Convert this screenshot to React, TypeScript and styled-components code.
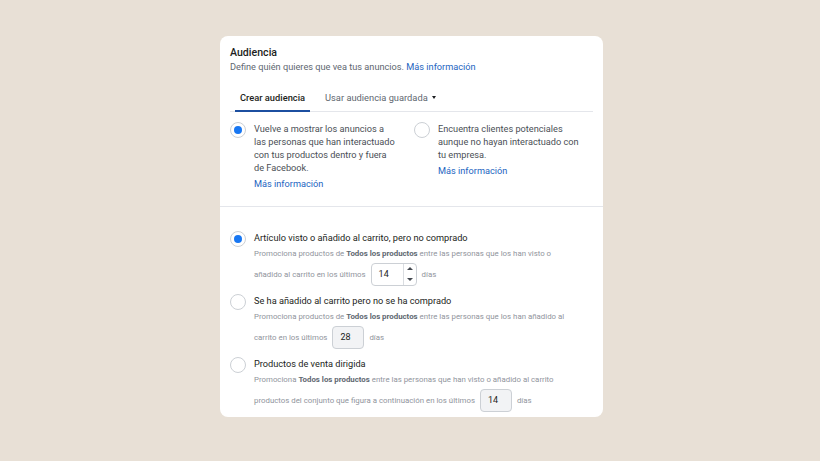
import React from "react";
import styled, { createGlobalStyle } from "styled-components";

const GlobalStyle = createGlobalStyle`
  html, body {
    margin: 0;
    padding: 0;
    background: #e8e0d6;
  }
  body {
    font-family: Roboto, "Liberation Sans", Arial, sans-serif;
    color: #1c1e21;
  }
`;

const Page = styled.div`
  width: 820px;
  height: 461px;
  display: flex;
  justify-content: center;
  padding-top: 36px;
  box-sizing: border-box;
`;

const Card = styled.div`
  width: 383px;
  height: 381px;
  margin-left: 3px;
  background: #fff;
  border-radius: 8px;
  box-sizing: border-box;
  padding-top: 10px;
`;

const Header = styled.div`
  padding: 0 10px;
`;

const Title = styled.div`
  font-size: 10.6px;
  font-weight: 500;
  line-height: 14px;
  color: #1c1e21;
`;

const Subtitle = styled.div`
  font-size: 9.2px;
  line-height: 14px;
  color: #606770;
`;

const Link = styled.a`
  color: #1d65c1;
  text-decoration: none;
`;

const Tabs = styled.div`
  margin: 11px 10px 0;
  display: flex;
  border-bottom: 1px solid #e4e6eb;
  padding-left: 5px;
`;

const Tab = styled.div<{ $active?: boolean }>`
  padding: 0 5px;
  height: 25px;
  display: flex;
  align-items: center;
  margin-right: 10px;
  font-size: 9.3px;
  font-weight: ${(p) => (p.$active ? 500 : 400)};
  color: ${(p) => (p.$active ? "#1c1e21" : "#606770")};
  border-bottom: 2px solid ${(p) => (p.$active ? "#1c4fa0" : "transparent")};
  margin-bottom: -1px;
`;

const Caret = styled.span`
  width: 0;
  height: 0;
  border-left: 2.5px solid transparent;
  border-right: 2.5px solid transparent;
  border-top: 3px solid #1c1e21;
  margin-left: 4px;
`;

const ChoiceGrid = styled.div`
  display: grid;
  grid-template-columns: 184px 170px;
  padding: 10px 10px 16px 10px;
  border-bottom: 1px solid #e4e6eb;
`;

const Choice = styled.div`
  display: flex;
  gap: 8px;
`;

const Radio = styled.span<{ $checked?: boolean }>`
  flex: 0 0 auto;
  width: 14px;
  height: 14px;
  border-radius: 50%;
  border: 1px solid #ccd0d5;
  background: #fff;
  display: flex;
  align-items: center;
  justify-content: center;
  &::after {
    content: "";
    width: 8px;
    height: 8px;
    border-radius: 50%;
    background: ${(p) => (p.$checked ? "#1877f2" : "transparent")};
  }
`;

const ChoiceBody = styled.div`
  font-size: 9.2px;
  line-height: 13px;
  color: #4b4f56;
  display: flex;
  flex-direction: column;
  gap: 3px;
  span {
    max-width: 142px;
  }
`;

const Options = styled.div`
  padding: 24px 10px 0;
  display: flex;
  flex-direction: column;
  gap: 8px;
`;

const Option = styled.div`
  display: flex;
  gap: 8px;
`;

const OptionBody = styled.div`
  display: flex;
  flex-direction: column;
`;

const OptionTitle = styled.div`
  font-size: 9.2px;
  line-height: 14px;
  color: #1c1e21;
`;

const Desc = styled.div`
  font-size: 7.85px;
  line-height: 16px;
  color: #90949c;
  margin-top: 1px;
  b {
    color: #606770;
    font-weight: 700;
  }
`;

const DaysRow = styled.div`
  display: flex;
  align-items: center;
  gap: 4px;
  font-size: 7.85px;
  color: #90949c;
  height: 24px;
`;

const NumBox = styled.div<{ $disabled?: boolean }>`
  width: ${(p) => (p.$disabled ? "32px" : "46px")};
  height: 23px;
  box-sizing: border-box;
  border: 1px solid #ccd0d5;
  border-radius: 4px;
  background: ${(p) => (p.$disabled ? "#f2f3f5" : "#fff")};
  display: flex;
  align-items: center;
  font-size: 9px;
  color: #1c1e21;
  padding-left: 7px;
  margin: 0 1px;
  position: relative;
`;

const Spinner = styled.div`
  position: absolute;
  right: 0;
  top: 0;
  bottom: 0;
  width: 12px;
  border-left: 1px solid #dadde1;
  display: flex;
  flex-direction: column;
  align-items: center;
  justify-content: space-around;
`;

const Arrow = styled.span<{ $up?: boolean }>`
  width: 0;
  height: 0;
  border-left: 3px solid transparent;
  border-right: 3px solid transparent;
  ${(p) =>
    p.$up ? "border-bottom: 3px solid #444950;" : "border-top: 3px solid #444950;"}
`;

export default function App() {
  return (
    <>
      <GlobalStyle />
      <Page>
        <Card>
          <Header>
            <Title>Audiencia</Title>
            <Subtitle>
              Define quién quieres que vea tus anuncios. <Link>Más información</Link>
            </Subtitle>
          </Header>
          <Tabs>
            <Tab $active>Crear audiencia</Tab>
            <Tab>
              Usar audiencia guardada <Caret />
            </Tab>
          </Tabs>
          <ChoiceGrid>
            <Choice>
              <Radio $checked />
              <ChoiceBody>
                <span>
                  Vuelve a mostrar los anuncios a las personas que han interactuado con
                  tus productos dentro y fuera de Facebook.
                </span>
                <Link>Más información</Link>
              </ChoiceBody>
            </Choice>
            <Choice>
              <Radio />
              <ChoiceBody>
                <span>
                  Encuentra clientes potenciales aunque no hayan interactuado con tu
                  empresa.
                </span>
                <Link>Más información</Link>
              </ChoiceBody>
            </Choice>
          </ChoiceGrid>
          <Options>
            <Option>
              <Radio $checked />
              <OptionBody>
                <OptionTitle>Artículo visto o añadido al carrito, pero no comprado</OptionTitle>
                <Desc>
                  Promociona productos de <b>Todos los productos</b> entre las personas
                  que los han visto o
                </Desc>
                <DaysRow>
                  añadido al carrito en los últimos
                  <NumBox>
                    14
                    <Spinner>
                      <Arrow $up />
                      <Arrow />
                    </Spinner>
                  </NumBox>
                  días
                </DaysRow>
              </OptionBody>
            </Option>
            <Option>
              <Radio />
              <OptionBody>
                <OptionTitle>Se ha añadido al carrito pero no se ha comprado</OptionTitle>
                <Desc>
                  Promociona productos de <b>Todos los productos</b> entre las personas
                  que los han añadido al
                </Desc>
                <DaysRow>
                  carrito en los últimos
                  <NumBox $disabled>28</NumBox>
                  días
                </DaysRow>
              </OptionBody>
            </Option>
            <Option>
              <Radio />
              <OptionBody>
                <OptionTitle>Productos de venta dirigida</OptionTitle>
                <Desc>
                  Promociona <b>Todos los productos</b> entre las personas que han visto
                  o añadido al carrito
                </Desc>
                <DaysRow>
                  productos del conjunto que figura a continuación en los últimos
                  <NumBox $disabled>14</NumBox>
                  días
                </DaysRow>
              </OptionBody>
            </Option>
          </Options>
        </Card>
      </Page>
    </>
  );
}
